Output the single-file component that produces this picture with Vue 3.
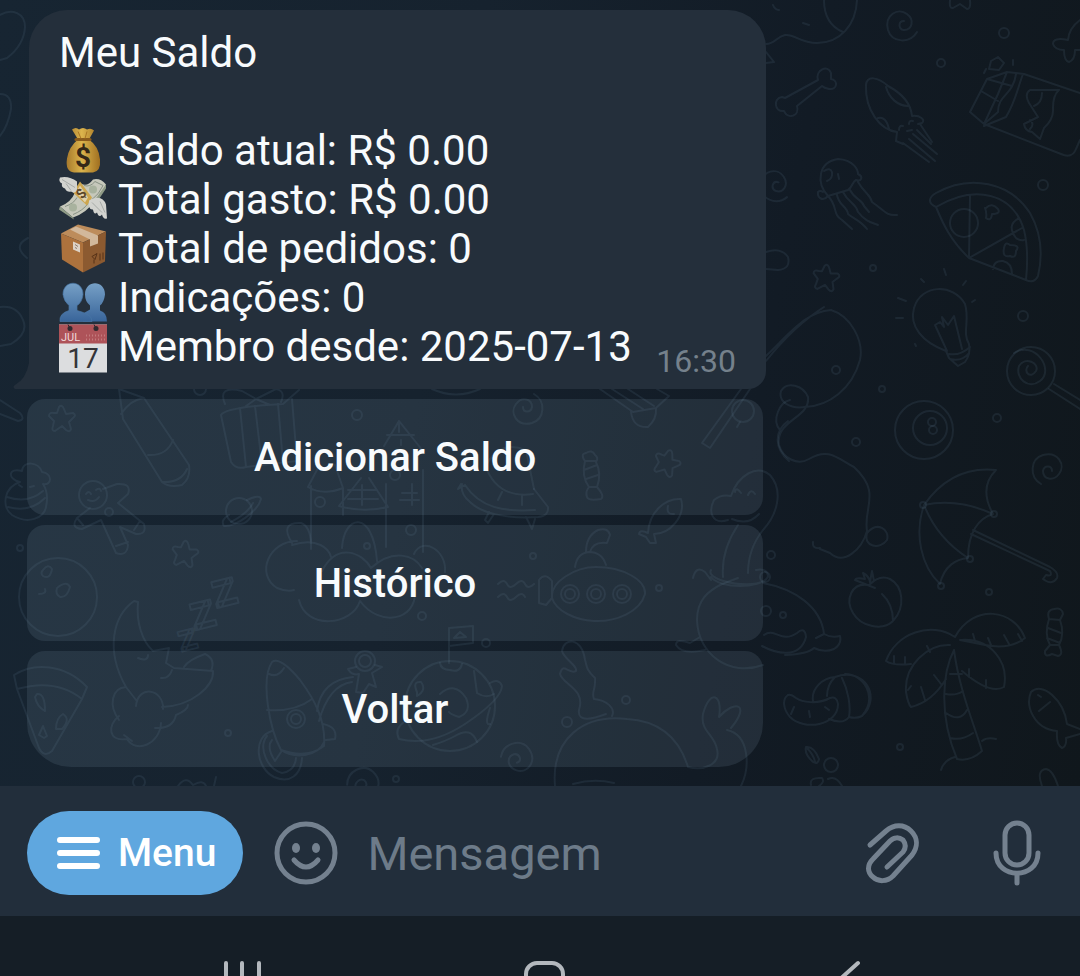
<script setup>
import { ref } from 'vue'

const draft = ref('')
const stats = [
  { icon: 'bag', text: 'Saldo atual: R$ 0.00' },
  { icon: 'cash', text: 'Total gasto: R$ 0.00' },
  { icon: 'box', text: 'Total de pedidos: 0' },
  { icon: 'people', text: 'Indicações: 0' },
  { icon: 'calendar', text: 'Membro desde: 2025-07-13' },
]
const actions = ['Adicionar Saldo', 'Histórico', 'Voltar']

// Small bubbles scattered over the wallpaper: x, y, radius
const dots = [
  [1004, 33, 5], [941, 63, 4], [1043, 185, 5], [873, 268, 3], [1023, 316, 5], [836, 370, 4],
  [882, 389, 3], [997, 418, 4], [856, 442, 4], [771, 555, 4], [765, 577, 5], [766, 611, 5],
  [783, 615, 3], [989, 592, 3], [900, 747, 3], [20, 548, 3], [200, 389, 6], [357, 415, 5],
  [320, 502, 5], [411, 530, 5], [367, 546, 3], [395, 475, 5], [533, 556, 3], [422, 616, 4],
  [486, 643, 4], [228, 733, 3], [139, 782, 6], [396, 779, 3], [626, 700, 4], [567, 722, 5],
  [659, 588, 3], [831, 765, 7], [109, 512, 4],
]
const stars = [[62, 419, 0], [185, 554, 8], [667, 463, 20], [826, 278, 8]]
const swirls = [[901, 26, 0], [774, 186, 20], [1047, 468, 90], [528, 410, 270], [518, 757, 160], [364, 782, 150]]
</script>

<template>
  <div class="screen">
    <main class="chat">
      <svg class="wallpaper" viewBox="0 0 1080 786" preserveAspectRatio="xMinYMin slice" aria-hidden="true">
        <circle v-for="d in dots" :key="d.join()" :cx="d[0]" :cy="d[1]" :r="d[2]" />
        <path
          v-for="s in stars" :key="s.join()" :transform="`translate(${s[0]} ${s[1]}) rotate(${s[2]})`"
          d="M-3 -12Q0 -15 2 -10L4 -5L11 -6Q15 -4 11 -1L7 3L9 10Q8 14 4 11L0 7L-7 12Q-11 12 -9 7L-8 2L-13 -3Q-13 -7 -8 -6L-5 -6Z"
        />
        <path
          v-for="s in swirls" :key="s.join()" :transform="`translate(${s[0]} ${s[1]}) rotate(${s[2]})`"
          d="M16 6C9 18 -9 17 -13 4C-17 -11 -3 -19 6 -12C14 -6 11 4 3 4C-3 3 -3 -5 3 -5"
        />
        <!-- snail, bone and squid -->
        <path d="M824 0Q824 24 843 32M857 0C856 25 840 43 817 43C800 43 795 34 785 35C776 37 775 44 766 44M773 5q2 5 6 5M803 23l6 2M766 52l8 10l-8 1" />
        <path d="M950 0q-1 9 3 8l7-4l7 5q4 0 3-9M1080 20Q1069 28 1068 40Q1053 37 1053 44Q1055 50 1064 50Q1064 61 1069 62Q1075 60 1075 50h5" />
        <path d="M785 98L818 80C815 70 828 64 831 73L831 79C838 80 838 90 829 89C824 88 822 86 822 86L797 106C800 116 788 120 784 111C774 112 773 98 782 97Z" />
        <path d="M897 132C880 130 865 110 866 85C867 75 878 77 888 86C905 95 911 106 912 116C920 115 926 120 922 123L918 124M886 87C889 98 898 106 908 106M878 118Q886 116 889 129M897 132L896 141L903 144M899 130q0-5 4-4M909 124q0-4 4-3M907 131l5-1M903 143L929 162M909 139L935 161M913 134L937 154M917 130L931 144M920 124L932 142" />
        <!-- jellyfish and chocolate bar -->
        <path d="M828 196C816 183 818 162 838 159C854 160 858 170 858 174C864 177 861 182 856 180C852 182 852 188 848 190L828 196C823 202 817 198 818 192Q820 190 823 192M824 171q6-4 8 1q1 7-5 9M838 174l1 5M828 196C838 206 832 214 842 220L852 229M837 195C839 206 847 206 848 214C854 219 860 220 867 229M843 192C849 204 855 202 858 212C865 221 870 222 878 225M850 190C855 200 862 199 864 206L869 212M858 182C865 194 870 194 872 202C885 211 886 216 897 215" />
        <path d="M1080 93L1024 74L1007 72L987 79L970 112L984 124L1061 154Q1072 159 1076 149L1080 140M1007 72L998 94L984 124M1016 74C1013 96 998 94 998 112L984 124M1023 74C1017 90 1016 100 1006 117L984 126M987 79L1012 86M981 91L998 101M1059 90H1030Q1024 94 1029 103L1038 117L1024 124Q1025 131 1032 132L1040 139L1044 128Q1054 119 1053 108Q1053 95 1059 90M1042 93q0 10-8 13M1030 120q5 4 0 9M991 61L998 57L1004 63L999 70L989 69ZM986 69l-2 4M1013 60v5" />
        <!-- pizza wedge -->
        <path d="M936 207C927 203 929 197 936 193C970 174 1010 182 1030 213C1043 236 1042 259 1038 276Q1034 284 1026 280L969 258C951 241 943 224 936 207C975 184 1013 193 1024 230Q1029 250 1026 280M970 195L969 258L1022 228M1019 218q-13 7-3 20q4 3 8 2M993 269q1-9 10-8q9 2 9 13M986 208q6-6 12 1q3 5-6 5q-1 8-6 4q1-5-1-10M1004 248q1-7 6-3q11 0 6 6q0 8-6 5q-8 2-6-8" />
        <circle cx="964" cy="223" r="14" />
        <path d="M766 252q15-5 22 5q3 12-10 13l-12-1" />
        <!-- light bulb, lollipop and ball -->
        <path d="M946 351C922 342 909 326 914 308C921 284 953 283 965 304C970 320 962 333 969 344Q971 354 965 362L958 366L949 358ZM949 354Q960 356 970 347M950 359Q962 362 969 353M947 351L935 325L940 322L944 327L942 317L948 325L954 316L962 349M921 279l3 3M944 269l2 6M966 281l-3 4M898 298l8 3M896 318h7M975 300l-3 2M915 344l1 2" />
        <circle cx="1031" cy="371" r="24" />
        <path d="M1014 353C1035 340 1055 370 1040 381C1028 390 1015 378 1019 366C1025 356 1040 363 1036 371C1030 380 1023 371 1028 366M1054 384L1080 400M1049 389L1080 409" />
        <circle cx="924" cy="430" r="29" />
        <circle cx="930" cy="428" r="17" />
        <circle cx="932" cy="422" r="4" />
        <circle cx="933" cy="430" r="4" />
        <!-- kite line -->
        <path d="M766 361C786 336 805 319 824 307M766 356C792 331 806 312 831 310C851 316 864 341 860 360C852 389 829 406 805 407C790 409 778 402 781 391C787 381 803 385 808 397C811 418 775 420 779 445C783 458 797 466 809 459C829 447 838 459 854 467C882 493 863 507 867 531C862 549 844 566 830 553L820 549M867 533C863 547 880 550 887 540C890 529 877 521 867 533M820 548q-8 1-7-6" />
        <!-- umbrella -->
        <path d="M924 505C943 478 967 467 996 470C984 482 983 496 993 514C979 518 968 532 968 558C956 559 944 566 940 584C921 566 914 534 924 505Q958 498 993 514M924 505Q937 538 968 558M973 530L1050 567Q1059 572 1057 578Q1052 586 1043 579L1046 575Q1053 577 1050 571L971 534" />
        <circle cx="923" cy="505" r="3" /><circle cx="994" cy="514" r="3" /><circle cx="970" cy="559" r="3" /><circle cx="941" cy="586" r="3" />
        <!-- peach, candies and palm -->
        <path d="M869 585C851 582 845 600 853 613C861 627 883 631 893 621C906 607 903 586 890 579Q880 574 869 585M882 594Q893 604 893 621M875 588L855 580Q856 577 865 579L863 573Q869 576 870 582L872 571L874 581L869 585" />
        <path d="M1049 619Q1046 610 1054 609Q1062 607 1063 614L1060 620Q1065 634 1059 645Q1064 655 1058 656L1052 654Q1044 658 1045 651L1050 645Q1044 634 1049 619L1060 620M1048 628L1061 633M1047 638L1060 643M1050 645H1059" />
        <path d="M955 637C974 603 1014 609 1025 638Q1010 650 985 645L960 640M955 637C931 621 896 633 886 661Q893 666 911 664M950 645C928 644 904 665 906 692Q908 704 911 707Q932 702 946 679M961 640C991 638 1009 662 1004 687Q990 695 962 671M954 650C943 671 938 714 957 759Q970 762 982 751C974 724 959 689 954 650M950 674H962M946 694Q956 696 963 691M946 713Q960 723 967 710M950 738Q962 741 973 733M894 656v7M905 657v7M927 646l3 6M973 634l2 7M988 638l3 7M1004 635l5 9M1018 634l4 7M934 675l7 9M921 687l4 13M908 690l3-4M955 757Q944 760 941 770M982 741Q987 737 996 739M969 669v8M986 680v8" />
        <!-- croissant and bean -->
        <path d="M813 701C811 689 822 678 835 677C865 666 882 698 862 716Q856 719 849 717Q843 725 829 719M827 696Q827 685 835 677M842 678C848 690 851 706 849 717M845 674C864 674 878 697 862 716M788 695C782 699 783 709 790 717C804 731 838 726 838 704Q837 696 830 698C817 705 802 702 796 698Q791 694 788 695M794 707l-3 7M809 711l1 6M825 707l4 3M806 747q8-1 13 12q-1 6-6 3q-9-8-7-15q8 8 9 15M811 785q-2-8 11-7q3 4-3 8M828 779q8-4 14 7" />
        <!-- fish, right edge -->
        <path d="M1057 731C1034 729 1025 706 1031 692C1042 681 1064 700 1067 724L1080 729M1057 731Q1056 745 1062 748Q1067 746 1066 738L1080 734M1039 711l11-9M1038 695l3 2M1042 786q-6-16 4-17q7 1 12 17" />
        <!-- whale, witch hat -->
        <path d="M763 583C795 589 821 607 824 634Q831 638 840 636Q842 644 834 649Q824 653 814 648M824 634L816 638M764 635C775 627 781 644 797 633Q805 626 806 637C800 660 775 653 762 646M814 648Q808 654 785 655M763 665C730 677 698 655 697 620C697 600 708 591 722 584L738 578M700 637L690 643Q676 638 676 645Q682 655 705 650" />
        <path d="M728 520C712 525 708 512 714 500Q721 494 731 496C738 475 757 464 770 475C784 491 777 515 763 530Q748 549 748 573M738 525C724 546 722 564 723 577M732 519Q748 526 759 514M735 492q1-6 6 1M748 495q3-7 7-1M711 570C704 582 764 592 768 576Q767 568 756 570M711 577C720 589 760 589 768 577M693 578q3-13 12-6l6 8" />
        <path d="M780 430C771 420 780 402 790 400M789 461C774 448 774 431 788 421" />
        <!-- submarine, squid, dino -->
        <path d="M552 598C550 582 575 567 596 567C623 567 646 580 645 594C640 612 616 622 594 621C575 620 556 611 552 598M575 567Q577 553 589 552Q602 552 606 565M586 552Q586 536 598 530Q608 527 610 535L607 543Q593 541 590 552M552 598L546 605L539 603V580Q545 572 552 581V598M498 584q6-6 9 0t9 0t9 0t9 0M498 597q6-6 9 0t9 0t9 0" />
        <circle cx="570" cy="594" r="9" /><circle cx="596" cy="594" r="9" /><circle cx="622" cy="594" r="9" />
        <circle cx="570" cy="594" r="5" /><circle cx="596" cy="594" r="5" /><circle cx="622" cy="594" r="5" />
        <path d="M612 716C616 708 606 700 594 699C591 692 596 690 595 678C586 670 587 666 585 660C582 637 564 637 562 651C564 659 578 666 576 671C568 675 563 661 560 674C563 685 586 689 579 710C577 724 595 718 606 714M555 786C551 738 584 714 627 719C663 721 680 741 688 767C703 771 721 765 717 749C714 734 700 731 703 714C710 688 723 695 719 717C735 699 751 704 731 728M727 730C750 735 750 768 741 786M573 784Q594 778 614 783" />
        <!-- fish, candy and brush behind the first buttons -->
        <path d="M648 533C649 512 665 498 681 499C686 516 670 534 654 534L656 543L650 543L646 537L639 534Q640 529 648 533M668 506q-2 9 6 8" />
        <path d="M585 461Q580 454 586 453Q592 449 595 455Q599 458 596 462Q602 474 597 487Q605 496 601 499Q588 501 587 497Q585 492 589 487Q581 476 585 461H596M584 470L597 465M586 479L598 475M589 487H597M741 389L702 443L710 448L750 389M600 389L633 412L656 408L669 396L657 389M612 389L643 409M628 389L654 406M631 412Q633 428 648 427Q657 419 656 408" />
        <circle cx="743" cy="411" r="11" /><path d="M740 422l-3 5M432 389Q456 400 480 389" />
        <!-- pen and gifts -->
        <path d="M119 389L123 419L162 482Q169 488 182 485Q191 478 189 465L144 398L119 389M121 414Q130 400 144 398M148 455Q167 456 173 440M162 482Q181 483 187 469M0 400L20 413Q26 420 18 421L0 414" />
        <path d="M221 415L231 462Q236 470 246 467L240 408M246 467L297 461L292 399M221 415Q225 407 283 404L299 390M255 406L262 465M278 404L283 462M225 404q-8-19 17-13l14 8l20-10q10 2 5 13M256 399l-10 7M256 399l14 6" />
        <!-- castle with clouds -->
        <path d="M311 549V486M343 488V515M386 484V547M423 470V552M384 446L399 421L423 451M387 435H414M399 421V432M308 487Q323 496 343 488L335 465M308 487L319 466M361 478L339 506Q363 513 388 507L369 478M362 485V505M348 490H376M401 440V445M348 499H378M402 493H417M400 500H419M412 484V505" />
        <path d="M292 543Q279 522 301 523Q310 526 311 543M297 541C269 541 255 574 277 588Q287 592 294 590M292 545C318 537 329 549 331 557M322 571C337 542 362 552 371 568C393 548 414 555 422 568M342 548C344 514 373 509 377 561M414 554C422 536 447 550 445 572M299 600C306 630 352 626 360 601C380 628 416 620 415 592" />
        <!-- ufo -->
        <path d="M462 484Q460 494 470 502C481 513 505 519 538 517Q549 516 548 507L534 489M465 485C480 508 504 512 535 510M485 465Q497 499 533 494M494 514l-6 9l-3-3l4-8M526 517l6 12l3-10M502 492l-4 8M522 496v9M465 485l-7 4l3-5" />
        <path d="M487 464Q500 440 526 450L534 489" />
        <!-- beehive face, gingerbread, planet -->
        <path d="M20 482C7 479 8 467 22 471C23 460 39 462 42 472C53 473 52 486 43 484M20 482C4 487 1 507 12 515C28 525 44 518 46 507Q49 493 43 484M7 497Q28 504 43 491M8 507Q30 513 45 498M19 485l3 2M30 487l4-1" />
        <circle cx="93" cy="495" r="14" />
        <path d="M86 494q3-4 5 0M96 490q4-3 5 1M88 500q7 3 11-3M103 489L117 484Q132 483 128 494L118 503L144 524Q147 535 136 534L120 527L128 545Q127 557 116 553L101 520L82 529Q70 528 77 518L90 508M77 518L83 525M140 521l-6 9M116 546l12-4" />
        <circle cx="239" cy="511" r="13" />
        <path d="M247 500Q260 494 261 499C258 511 236 527 224 526Q220 520 229 515M253 503Q248 513 231 522" />
        <!-- moon asleep, tree -->
        <circle cx="58" cy="597" r="39" />
        <path d="M43 570q5-7 9-1q-2 11-9 7q-3-3 0-6M57 588q10-8 13-1q-3 11-10 10q-5-3-3-9M39 594q8 0 6-5" />
        <path d="M126 687C105 650 113 616 134 601L138 602C136 622 142 641 153 651L169 648L166 663L174 668L213 671C214 686 192 706 162 707M126 687C112 688 108 705 119 720M126 687L136 700M136 706C138 684 164 689 163 709M119 716C107 725 108 742 127 739C136 754 160 744 161 723M155 728Q173 729 176 715Q188 710 188 705M148 655q0 7-10 3M161 678q8 1 11-8M184 667Q188 660 205 654Q216 659 211 671M124 735L132 741" />
        <text class="snore" x="177" y="650" font-size="38" transform="rotate(-14 187 636)">z</text>
        <text class="snore" x="190" y="628" font-size="50" transform="rotate(-14 203 614)">z</text>
        <text class="snore" x="212" y="606" font-size="50" transform="rotate(-14 224 593)">z</text>
        <!-- slice of watermelon -->
        <path d="M14 675C34 662 65 664 87 687L82 699C61 682 38 683 17 689ZM17 689L39 748Q44 758 52 751L82 699M37 694q8-1 8 17q-8-4-10-14ZM56 729q0-11 7-15q8 5-1 15ZM39 735l4-9l4 10l-3 2Z" />
        <!-- rocket -->
        <path d="M281 750C270 730 260 680 272 662Q280 656 300 680C315 700 326 721 324 746Q307 759 281 750M269 674Q278 678 284 668M267 710Q295 712 312 699M281 750C294 759 318 757 324 742M323 724Q338 727 335 739L326 740M272 731C252 737 256 768 274 777C290 784 301 775 302 758M267 736C258 747 267 769 282 773Q295 771 296 758M272 740Q266 747 275 761L281 752M317 711Q321 680 353 677M319 721Q329 685 352 682" />
        <circle cx="296" cy="719" r="9" /><circle cx="296" cy="719" r="5" />
        <circle cx="365" cy="661" r="10" /><circle cx="365" cy="661" r="6" />
        <path d="M356 667L348 669Q352 676 359 674L356 692L363 693L369 684L376 687L372 673L382 667L375 665" />
        <!-- planet with flag -->
        <circle cx="450" cy="706" r="45" />
        <path d="M449 663V628L473 626V643L449 646M454 638l6-6l6 5ZM440 663q1 7 10 7q10 3 12-6M404 722Q394 729 399 739Q430 747 465 724Q501 700 502 686Q499 678 490 683M433 745Q446 741 455 736Q471 726 477 742M417 692q-5-11 4-10q6 8-4 14ZM474 671l3 22q9 6 17 1M440 694Q455 681 466 698Q472 712 459 717Q450 714 449 712M490 708q-6 18 0 16" />
        <path d="M178 786q8-11 15-1q10-6 13 1M216 777l-2 9" />
        <!-- left margin shapes -->
        <path d="M0 15C12 8 25 13 25 27Q24 45 7 58L0 60M0 94Q12 94 11 109Q8 126 0 136M28 238Q12 246 27 258M0 307Q17 305 23 320Q29 333 11 344L0 346" />
      </svg>

      <article class="message">
        <div class="bubble">
          <svg class="tail" viewBox="0 0 32 32" aria-hidden="true"><path d="M16 0V32H2Q-1 30 2 28Q13 22 16 6Z" /></svg>
          <h1 class="title">Meu Saldo</h1>
          <ul class="stats">
            <li v-for="item in stats" :key="item.icon">
              <svg v-if="item.icon === 'bag'" class="emoji" viewBox="0 0 48 48" aria-hidden="true">
                <defs><linearGradient id="gold"><stop offset="0" stop-color="#a87a2c" /><stop offset=".45" stop-color="#dcb44c" /><stop offset="1" stop-color="#a06f20" /></linearGradient></defs>
                <path fill="url(#gold)" d="M13 3Q17 0 20 3Q24 0 28 3Q32 1 35 4L30 13Q40 20 41 33Q42 45 34 46H15Q6 45 8 32Q10 20 19 13Z" />
                <path d="M17 13H31" stroke="#8a5b1c" stroke-width="3" stroke-linecap="round" />
                <path d="M19 5l3 7M28 5l-2 7" stroke="#a97524" stroke-width="1" />
                <text x="24" y="40" class="coin">$</text>
              </svg>
              <svg v-else-if="item.icon === 'cash'" class="emoji" viewBox="0 0 48 48" aria-hidden="true">
                <path fill="#c6c8bb" d="M22 8Q28 12 34 4Q41 2 47 9Q42 21 34 27Q28 37 14 42L1 31Q12 27 16 17Z" />
                <path fill="#8f9b86" d="M1 31L14 42L15 44L0 34ZM47 9V13L35 31L34 27Z" />
                <path fill="none" stroke="#879184" d="M25 10Q31 12 36 6L44 10Q40 19 33 24M6 31Q15 28 18 22M14 39Q24 35 29 28" />
                <circle cx="14" cy="32" r="4" fill="#a8b29e" /><circle cx="34" cy="14" r="4" fill="#a8b29e" />
                <path fill="#cda64f" d="M21 6L33 22L28 30L14 17Z" /><path fill="#e0d2ac" d="M21 10L29 22L26 27L17 17Z" />
                <text x="22" y="23" class="note" transform="rotate(-50 22 18)">$</text>
                <path fill="#d2d3cf" d="M1 2Q10 0 18 6V14Q16 19 12 16Q8 17 6 13Q2 12 3 8Q-1 6 1 2ZM30 25Q43 18 47 29L48 43Q44 44 43 39Q40 43 38 37Q35 40 34 34Q29 35 30 25Z" />
                <path fill="none" stroke="#a6aaa7" d="M3 4L16 12M7 8L12 15M33 27L43 37M41 26L46 37" />
              </svg>
              <svg v-else-if="item.icon === 'box'" class="emoji" viewBox="0 0 48 48" aria-hidden="true">
                <path fill="#bd8c5b" d="M2 9L19 0L47 7L24 18Z" /><path fill="#ad723d" d="M2 9L24 18V48L3 35Z" /><path fill="#8c5a30" d="M24 18L47 7L46 37L24 48Z" />
                <path fill="#d2b89b" d="M11 5L17 2L39 11V19L31 22V15Z" /><path fill="#ddd2c6" d="M14 17L21 20V28L14 25Z" />
                <path d="M16 20l3 2M16 23l2 1" stroke="#8c7b6e" />
                <path fill="none" stroke="#553117" d="M33 32l5-3l-2 6zM35 35v4M41 29v7M44 28v7" />
              </svg>
              <svg v-else-if="item.icon === 'people'" class="emoji" viewBox="0 -2 48 48" aria-hidden="true">
                <defs><linearGradient id="blue" x2="0" y2="1"><stop offset="0" stop-color="#76a0c6" /><stop offset="1" stop-color="#39659a" /></linearGradient></defs>
                <path fill="url(#blue)" d="M24 46V38L31 34V30Q26 26 26 19C26 4 46 4 46 19Q45 27 41 30V35Q48 37 48 46Z" />
                <path fill="url(#blue)" stroke="#4876a5" stroke-width=".7" d="M1 46Q0 38 10 35V30Q5 26 4 19C4 4 24 4 24 19Q23 27 18 30V35Q29 38 32 42L33 46Z" />
              </svg>
              <svg v-else class="emoji" viewBox="0 -2 48 48" aria-hidden="true">
                <path fill="#dcdddf" d="M0 0H48V48H0Z" /><path fill="#ae5359" d="M0 0H48V19H0Z" />
                <circle cx="11" cy="4" r="2.5" fill="#302a30" /><circle cx="37" cy="4" r="2.5" fill="#302a30" /><path d="M11 4l-2-4M37 4l-2-4" stroke="#302a30" />
                <path d="M27 11H46M27 15H46" stroke="#c47a7d" stroke-width="2" stroke-dasharray="1 2" />
                <text x="2" y="16" class="month">JUL</text><text x="24" y="43" class="day">17</text>
              </svg>
              <span>{{ item.text }}</span>
            </li>
          </ul>
          <time class="time">16:30</time>
        </div>
        <div class="keyboard">
          <button v-for="label in actions" :key="label" type="button">{{ label }}</button>
        </div>
      </article>
    </main>

    <form class="composer" @submit.prevent>
      <button class="menu" type="button">
        <svg width="44" height="36" viewBox="0 0 44 36" aria-hidden="true"><path d="M4 5H41M4 18H41M4 31H41" /></svg>
        <span>Menu</span>
      </button>
      <button class="icon" type="button" aria-label="Emoji">
        <svg width="64" height="64" viewBox="0 0 64 64"><circle cx="32" cy="32" r="29" /><path d="M20 39Q32 53 44 39" /><ellipse class="eye" cx="22" cy="27" rx="4" ry="5" /><ellipse class="eye" cx="42" cy="27" rx="4" ry="5" /></svg>
      </button>
      <input v-model="draft" type="text" placeholder="Mensagem" aria-label="Mensagem" />
      <button class="icon" type="button" aria-label="Anexar">
        <svg width="60" height="68" viewBox="0 0 60 68"><path d="M8 26L24 12C32 5 42 5 49 12C56 19 56 28 50 36L31 57C25 63 16 63 11 58C5 53 5 46 11 40L28 22C32 18 37 18 41 21C44 25 44 29 41 33L25 48" /></svg>
      </button>
      <button class="icon mic" type="button" aria-label="Gravar áudio">
        <svg width="50" height="68" viewBox="0 0 50 68"><rect x="13" y="4" width="24" height="42" rx="12" /><path d="M4 34C4 61 46 61 46 34M25 55V64" /></svg>
      </button>
    </form>

    <nav class="system" aria-label="Sistema">
      <button type="button" aria-label="Recentes"><svg width="42" height="40" viewBox="0 0 42 40"><path d="M5 4V38M21 4V38M38 4V38" /></svg></button>
      <button type="button" aria-label="Início"><svg width="42" height="40" viewBox="0 0 42 40"><rect x="3" y="4" width="37" height="35" rx="11" /></svg></button>
      <button type="button" aria-label="Voltar"><svg width="42" height="40" viewBox="0 0 42 40"><path d="M33 4L13 22L33 39" /></svg></button>
    </nav>
  </div>
</template>

<style>
body { margin: 0; background: #151e26; }
</style>

<style scoped>
.screen {
  display: flex;
  flex-direction: column;
  height: 100vh;
  overflow: hidden;
  font-family: Roboto, "Noto Sans", sans-serif;
  color: #f8fbfd;
}
button { padding: 0; border: 0; background: none; color: inherit; font: inherit; cursor: pointer; }
svg { display: block; flex: none; }

.chat {
  position: relative;
  flex: 1;
  min-height: 0;
  overflow: hidden;
  background: linear-gradient(100deg, #172532 0%, #16222e 40%, #121b25 68%, #10171c 100%);
}
.wallpaper {
  position: absolute;
  inset: 0;
  width: 100%;
  height: 100%;
  fill: none;
  stroke: rgba(115, 145, 170, 0.12);
  stroke-width: 2;
  stroke-linecap: round;
  stroke-linejoin: round;
}
.snore { font-family: Roboto, sans-serif; font-weight: 700; }
.message {
  position: relative;
  width: calc(100% - 344px);
  min-width: fit-content;
  margin: 10px 0 0 27px;
}
.bubble {
  position: relative;
  margin: 0 -3px 0 2px;
  padding: 18px 30px 18px;
  border-radius: 38px 38px 18px 0;
  background: #242f3b;
}
.tail { position: absolute; left: -16px; bottom: 0; width: 32px; height: 32px; fill: #242f3b; }
.title { margin: 0 0 49px; font-size: 42px; line-height: 49px; font-weight: 400; }
.stats { margin: 0; padding: 0; list-style: none; font-size: 42px; line-height: 49px; white-space: nowrap; }
.stats li { display: flex; align-items: center; gap: 11px; }
.emoji { width: 48px; height: 49px; overflow: visible; }
.coin { fill: #352817; font: 700 28px Roboto, sans-serif; text-anchor: middle; }
.note { fill: #5c4628; font: 700 14px Roboto, sans-serif; text-anchor: middle; }
.month { fill: #f1d9d9; font: 11px Roboto, sans-serif; }
.day { fill: #343438; font: 28px Roboto, sans-serif; text-anchor: middle; }
.time {
  position: absolute;
  right: 30px;
  bottom: 9px;
  color: #75818c;
  font-size: 32px;
  line-height: 38px;
}

.keyboard { display: grid; gap: 10px; margin-top: 10px; }
.keyboard button {
  height: 116px;
  border-radius: 18px;
  background: rgba(125, 148, 168, 0.16);
  font-size: 40px;
  font-weight: 500;
}
.keyboard button:last-child { border-radius: 18px 18px 44px 44px; }

.composer {
  display: flex;
  align-items: center;
  padding: 25px 38px 21px 27px;
  background: #222e3b;
}
.menu {
  display: flex;
  align-items: center;
  gap: 18px;
  height: 84px;
  padding: 0 27px 0 29px;
  border-radius: 42px;
  background: #5fa7df;
  color: #fff;
  font-size: 39px;
  font-weight: 500;
}
.menu svg { fill: none; stroke: #fff; stroke-width: 6; stroke-linecap: round; }
.icon { margin-left: 31px; }
.icon svg { fill: none; stroke: #74818f; stroke-width: 5; stroke-linecap: round; stroke-linejoin: round; }
.icon .eye { fill: #74818f; stroke: none; }
.mic { margin-left: 70px; }
input {
  flex: 1;
  min-width: 0;
  margin-left: 29px;
  padding: 0;
  border: 0;
  outline: 0;
  background: none;
  color: #f8fbfd;
  font: 47px Roboto, "Noto Sans", sans-serif;
}
input::placeholder { color: #6d7b89; opacity: 1; }

.system {
  display: grid;
  grid-template-columns: repeat(3, 1fr);
  height: 60px;
  box-sizing: border-box;
  padding: 43px 83px 0 91px;
  overflow: hidden;
  background: #151e26;
}
.system button { display: grid; justify-content: center; align-content: start; height: 40px; }
.system svg { fill: none; stroke: #b3b8bd; stroke-width: 4; stroke-linecap: round; stroke-linejoin: round; }
</style>
